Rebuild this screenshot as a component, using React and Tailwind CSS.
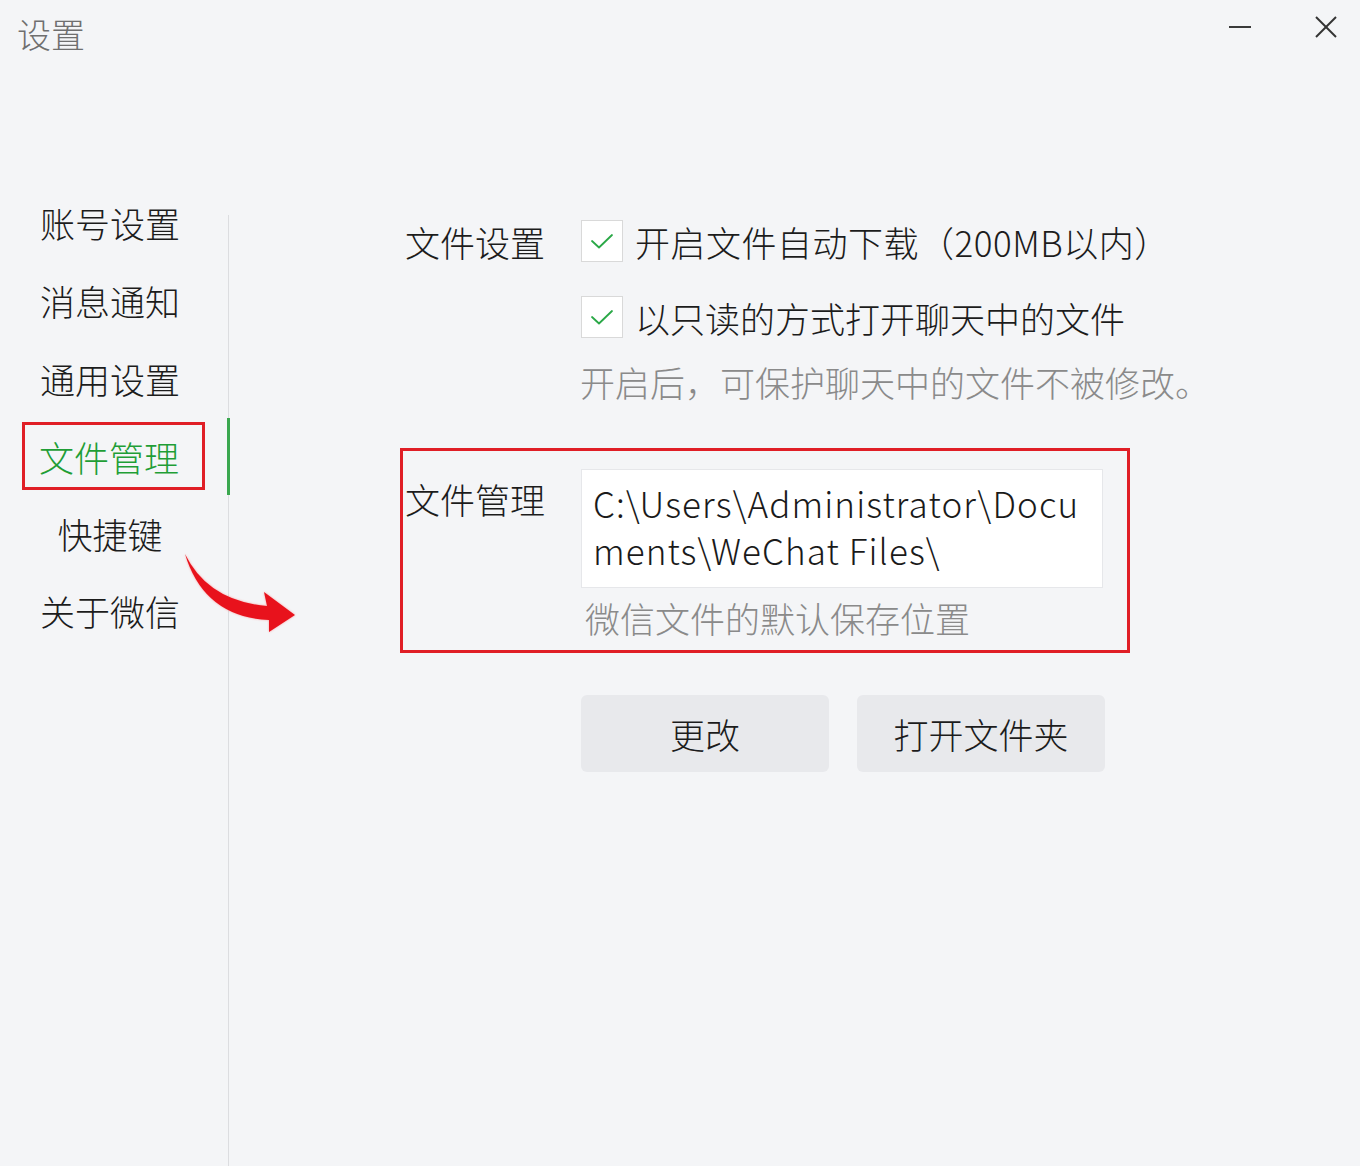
import React from "react";

const FONT = { fontFamily: '"Noto Sans CJK SC", "Noto Sans", sans-serif' };

function Check() {
  return (
    <div className="w-[42px] h-[42px] bg-white border border-[#d9d9d9] flex items-center justify-center shrink-0">
      <svg width="26" height="20" viewBox="0 0 26 20" fill="none">
        <path d="M3 10 L10 16.5 L23 4" stroke="#2aa847" strokeWidth="1.8" strokeLinecap="round" strokeLinejoin="round" />
      </svg>
    </div>
  );
}

function NavItem({ children }) {
  return (
    <div className="h-[78px] flex items-center justify-center text-[35px] text-[#1c1c1c] leading-none">
      {children}
    </div>
  );
}

export default function App() {
  return (
    <div className="w-[1360px] h-[1166px] bg-[#f4f5f7] relative overflow-hidden font-light" style={FONT}>
      {/* Title bar */}
      <div className="h-[70px] flex items-start justify-between">
        <div className="pl-[17px] pt-[11px] text-[34px] leading-[46px] text-[#6f6f6f]">设置</div>
        <div className="flex items-center gap-[62px] pr-[22px] pt-[16px]">
          <svg width="24" height="22" viewBox="0 0 24 22">
            <line x1="1" y1="11" x2="23" y2="11" stroke="#3a3a3a" strokeWidth="2" />
          </svg>
          <svg width="24" height="22" viewBox="0 0 24 22">
            <line x1="2" y1="1" x2="22" y2="21" stroke="#333" strokeWidth="2" />
            <line x1="22" y1="1" x2="2" y2="21" stroke="#333" strokeWidth="2" />
          </svg>
        </div>
      </div>

      {/* Body */}
      <div className="flex mt-[113px]">
        {/* Sidebar */}
        <div className="w-[227px] flex flex-col pr-[7px]">
          <NavItem>账号设置</NavItem>
          <NavItem>消息通知</NavItem>
          <NavItem>通用设置</NavItem>
          <div className="h-[78px] flex items-center">
            <div className="ml-[22px] w-[183px] h-[68px] border-[3px] border-[#e01e26] flex items-center pl-[14px] text-[35px] text-[#1f9e36] leading-none">
              文件管理
            </div>
          </div>
          <div className="h-[76px] flex items-center justify-center text-[35px] text-[#1c1c1c] leading-none">快捷键</div>
          <NavItem>关于微信</NavItem>
        </div>

        {/* Divider */}
        <div className="w-[3px] flex flex-col items-center mt-[32px] h-[951px]">
          <div className="w-[1px] h-[203px] bg-[#dcdde0]" />
          <div className="w-[3px] h-[77px] bg-[#3aa74f]" />
          <div className="w-[1px] flex-1 bg-[#dcdde0]" />
        </div>

        {/* Main */}
        <div className="ml-[175px] pt-[37px] flex flex-col text-[#1c1c1c]">
          <div className="flex items-center h-[42px]">
            <div className="w-[176px] text-[35px] leading-none">文件设置</div>
            <Check />
            <div className="ml-[12px] text-[35px] leading-none tracking-[0.5px]">开启文件自动下载（200MB以内）</div>
          </div>
          <div className="flex items-center h-[42px] mt-[34px]">
            <div className="w-[176px]" />
            <Check />
            <div className="ml-[12px] text-[35px] leading-none">以只读的方式打开聊天中的文件</div>
          </div>
          <div className="flex mt-[23px]">
            <div className="w-[175px]" />
            <div className="text-[35px] leading-[42px] text-[#8a8a8a]">开启后，可保护聊天中的文件不被修改。</div>
          </div>

          {/* Red highlighted box */}
          <div className="ml-[-5px] mt-[45px] w-[730px] h-[205px] border-[3px] border-[#e01e26] flex">
            <div className="w-[178px] pl-[2px] pt-[30px] text-[35px] leading-none">文件管理</div>
            <div className="flex flex-col pt-[18px]">
              <div className="w-[522px] h-[119px] bg-white border border-[#e6e7ea] pl-[11px] pt-[9px] text-[35px] leading-[47px] text-[#1a1a1a] whitespace-nowrap tracking-[1.1px]">
                <div>C:\Users\Administrator\Docu</div>
                <div>ments\WeChat Files\</div>
              </div>
              <div className="pl-[4px] mt-[9px] text-[35px] leading-[42px] text-[#8a8a8a]">微信文件的默认保存位置</div>
            </div>
          </div>

          {/* Buttons */}
          <div className="flex gap-[28px] mt-[42px] ml-[176px]">
            <div className="w-[248px] h-[77px] rounded-[6px] bg-[#e8e9ec] flex items-center justify-center text-[35px] leading-none text-[#1c1c1c]">更改</div>
            <div className="w-[248px] h-[77px] rounded-[6px] bg-[#e8e9ec] flex items-center justify-center text-[35px] leading-none text-[#1c1c1c]">打开文件夹</div>
          </div>
        </div>
      </div>

      {/* Red arrow annotation */}
      <svg className="absolute left-[180px] top-[545px]" width="125" height="95" viewBox="0 0 125 95">
        <defs>
          <filter id="glow" x="-20%" y="-20%" width="140%" height="140%">
            <feGaussianBlur stdDeviation="1.2" />
          </filter>
        </defs>
        <path d="M5 9 Q 28 56 87 61 L 84 47 L 115 70 L 89 87 L 89 75 Q 24 72 5 9 Z" fill="#ff4a4a" opacity="0.5" filter="url(#glow)" />
        <path d="M5 9 Q 28 56 87 61 L 84 47 L 115 70 L 89 87 L 89 75 Q 24 72 5 9 Z" fill="#e8121c" />
      </svg>
    </div>
  );
}
